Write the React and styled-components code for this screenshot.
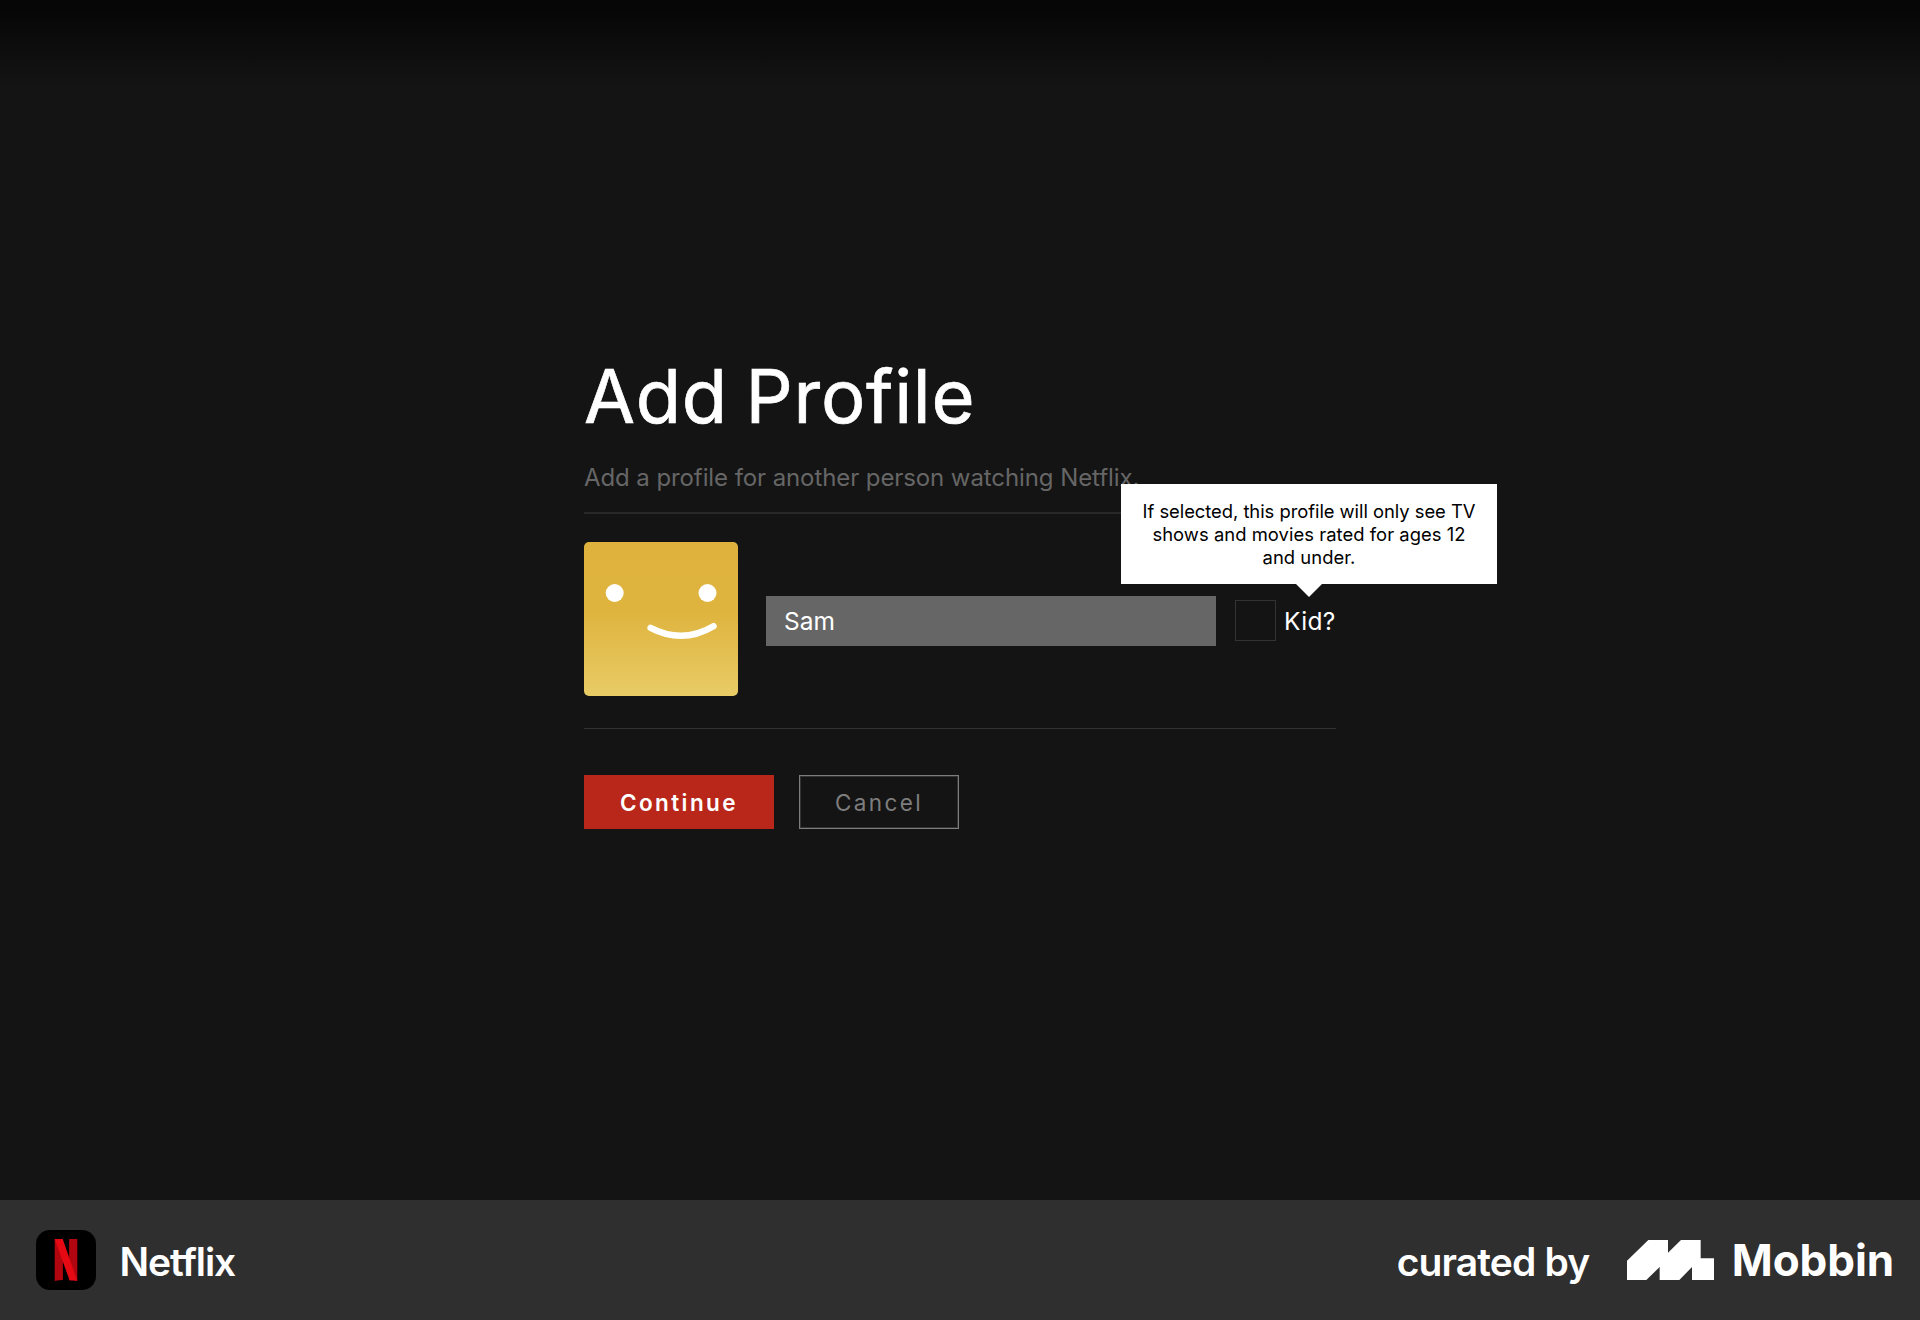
import React from "react";
import styled, { createGlobalStyle } from "styled-components";

const GlobalStyle = createGlobalStyle`
  *, *::before, *::after { box-sizing: border-box; }
  body {
    margin: 0;
    background: #141414;
    font-family: Inter, "Liberation Sans", sans-serif;
  }
`;

const Page = styled.div`
  display: flex;
  flex-direction: column;
  width: 1920px;
  height: 1320px;
  overflow: hidden;
  background: #141414;
`;

const Screen = styled.main`
  flex: 1;
  display: flex;
  justify-content: center;
  align-items: flex-start;
  padding-top: 351px;
  background: linear-gradient(to bottom, rgba(0, 0, 0, 0.7) 10%, rgba(0, 0, 0, 0)) 0 0 / 100% 88px no-repeat;
`;

const ProfileForm = styled.form`
  display: flex;
  flex-direction: column;
  width: 752px;
`;

const Title = styled.h1`
  margin: 0;
  color: #fff;
  font-size: 74px;
  font-weight: 400;
  line-height: 90px;
  letter-spacing: 0.75px;
  word-spacing: -4px;
  -webkit-text-stroke: 0.7px #fff;
`;

const Subtitle = styled.p`
  margin: 22px 0 19px;
  color: #666;
  font-size: 24px;
  line-height: 30px;
  letter-spacing: -0.09px;
  white-space: nowrap;
`;

const Entry = styled.section`
  display: flex;
  align-items: flex-start;
  padding: 28px 0 32px;
  border-top: 2px solid #282828;
  border-bottom: 1px solid #333;
`;

const Avatar = styled.svg`
  display: block;
  flex: none;
  width: 154px;
  height: 154px;
  border-radius: 5px;
  background: linear-gradient(to bottom, #deb23c 0%, #dfb43e 45%, #e3be50 70%, #e8cc66 100%);
`;

const Fields = styled.div`
  display: flex;
  align-items: center;
  height: 51px;
  margin: 53px 0 0 28px;
`;

const NameInput = styled.input`
  width: 450px;
  height: 50px;
  padding: 1px 18px 0;
  border: 0;
  border-radius: 0;
  outline: 0;
  background: #666;
  color: #fff;
  font: 400 24.5px/30px Inter, "Liberation Sans", sans-serif;
  letter-spacing: 0;
`;

const Checkbox = styled.span`
  width: 41px;
  height: 41px;
  margin-left: 19px;
  border: 1px solid #333;
  background: #141414;
`;

const KidLabel = styled.label`
  position: relative;
  margin-left: 8px;
  color: #fff;
  font-size: 24.5px;
  line-height: 30px;
  letter-spacing: 0.3px;
`;

const Tooltip = styled.div`
  position: absolute;
  left: 25px;
  bottom: 52px;
  display: flex;
  flex-direction: column;
  align-items: center;
  width: 376px;
  height: 100px;
  padding-top: 16px;
  transform: translateX(-50%);
  background: #fff;
  color: #000;
  font-size: 18.4px;
  line-height: 23px;
  white-space: nowrap;

  &::after {
    content: "";
    position: absolute;
    top: 100%;
    left: 50%;
    margin-left: -13px;
    border: 13px solid transparent;
    border-top-color: #fff;
    border-bottom: 0;
  }
`;

const TooltipLine = styled.span`
  letter-spacing: ${({ $tracking }) => $tracking}px;
`;

const Actions = styled.div`
  display: flex;
  gap: 25px;
  margin-top: 46px;
`;

const Button = styled.button`
  width: ${({ $primary }) => ($primary ? 190 : 160)}px;
  height: 54px;
  padding: 1px 0 0;
  border: ${({ $primary }) => ($primary ? "0" : "1px solid #7d7d7d")};
  box-shadow: ${({ $primary }) => ($primary ? "none" : "inset 0 0 0 1px #333")};
  background: ${({ $primary }) => ($primary ? "#b9271a" : "transparent")};
  color: ${({ $primary }) => ($primary ? "#fff" : "#7d7d7d")};
  font: ${({ $primary }) => ($primary ? 600 : 400)} 22.5px/30px Inter, "Liberation Sans", sans-serif;
  letter-spacing: 2.4px;
`;

const CreditBar = styled.footer`
  display: flex;
  align-items: center;
  justify-content: space-between;
  height: 120px;
  padding: 0 26px 0 36px;
  background: #2f2f2f;
  color: #fff;
`;

const CreditGroup = styled.div`
  display: flex;
  align-items: center;
`;

const AppIcon = styled.svg`
  display: block;
  width: 60px;
  height: 60px;
  border-radius: 14px;
  background: #000;
`;

const CreditText = styled.span`
  margin-left: ${({ $indent = 0 }) => $indent}px;
  padding-top: 3px;
  font-size: 39px;
  font-weight: 600;
  line-height: 50px;
  letter-spacing: ${({ $tracking }) => $tracking}px;
`;

const MobbinMark = styled.svg`
  display: block;
  width: 87px;
  height: 40px;
  margin: 0 17.5px 0 38px;
`;

const MobbinName = styled.span`
  font-size: 44px;
  font-weight: 700;
  line-height: 54px;
  letter-spacing: -0.1px;
`;

export default function App() {
  return (
    <Page>
      <GlobalStyle />
      <Screen>
        <ProfileForm>
          <Title>Add Profile</Title>
          <Subtitle>Add a profile for another person watching Netflix.</Subtitle>
          <Entry>
            <Avatar viewBox="0 0 154 154">
              <circle cx="30.7" cy="51" r="9" fill="#fff" />
              <circle cx="123.5" cy="51" r="9" fill="#fff" />
              <path d="M66.6 85.8Q98.5 102.5 129.5 84.2" fill="none" stroke="#fff" strokeWidth="6.4" strokeLinecap="round" />
            </Avatar>
            <Fields>
              <NameInput defaultValue="Sam" />
              <Checkbox />
              <KidLabel>
                Kid?
                <Tooltip>
                  <TooltipLine $tracking={-0.04}>If selected, this profile will only see TV</TooltipLine>
                  <TooltipLine $tracking={0.05}>shows and movies rated for ages 12</TooltipLine>
                  <TooltipLine $tracking={0.05}>and under.</TooltipLine>
                </Tooltip>
              </KidLabel>
            </Fields>
          </Entry>
          <Actions>
            <Button type="button" $primary>Continue</Button>
            <Button type="button">Cancel</Button>
          </Actions>
        </ProfileForm>
      </Screen>
      <CreditBar>
        <CreditGroup>
          <AppIcon viewBox="0 0 60 60">
            <path d="M18.7 9h8.2v41.1q-4 .2-8.2.8zM33.1 9h8.2v41.5h-8.2z" fill="#b1060f" />
            <path d="M18.7 9h8l14.6 41.9q-3.800-.6-7.800-.8z" fill="#e50914" />
          </AppIcon>
          <CreditText $indent={23.5} $tracking={-1.05}>Netflix</CreditText>
        </CreditGroup>
        <CreditGroup>
          <CreditText $tracking={-0.86}>curated by</CreditText>
          <MobbinMark viewBox="81 60 261 120">
            <path d="M81 122L145 60H204V98L243 60H302V115H342V180H276V141L238 180H179V141L139 180H81Z" fill="#fff" />
          </MobbinMark>
          <MobbinName>Mobbin</MobbinName>
        </CreditGroup>
      </CreditBar>
    </Page>
  );
}
